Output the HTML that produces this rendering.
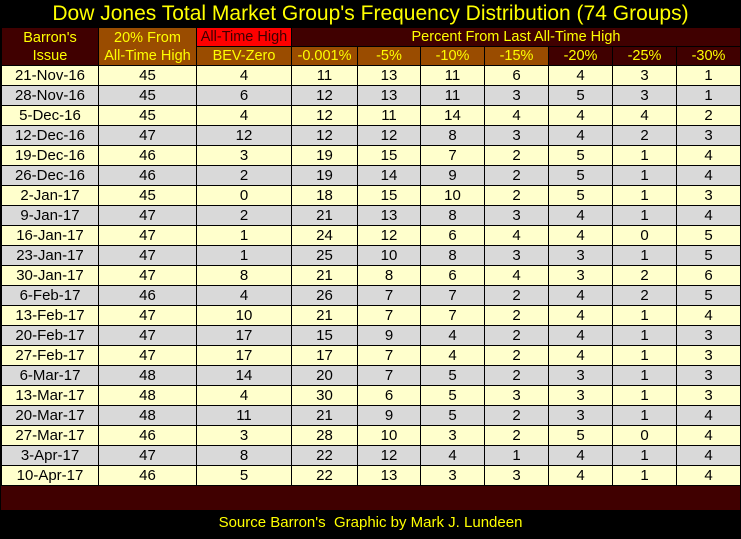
<!DOCTYPE html>
<html><head><style>
body{margin:0;width:741px;height:539px;background:#000;overflow:hidden;font-family:"Liberation Sans",Arial,sans-serif;position:relative}
.t{position:absolute;left:0;top:1px;width:741px;text-align:center;color:#ffff00;font-size:21px;line-height:26px}
table{position:absolute;left:1px;top:27px;border-collapse:collapse;table-layout:fixed}
td{border:1px solid #000;padding:0;text-align:center;font-size:15px;line-height:19px;height:19px;color:#000;overflow:hidden;white-space:nowrap}
tr.h td{color:#ffff00;font-size:14.5px;height:18px;line-height:18px}
.m{background:#400000}.b{background:#9a4c00}.r{background:#ff0000;color:#400000!important}
tr.o td{background:#ffffcc}tr.e td{background:#d9d9d9}
.bot{position:absolute;left:1px;top:486px;width:739px;height:24px;background:#400000}
.s{position:absolute;left:0;width:741px;top:514px;text-align:center;color:#ffff00;font-size:15px}
</style></head><body>
<div class="t">Dow Jones Total Market Group's Frequency Distribution (74 Groups)</div>
<table>
<colgroup><col style="width:97px"><col style="width:98px"><col style="width:95px"><col style="width:66px"><col style="width:63px"><col style="width:64px"><col style="width:64px"><col style="width:64px"><col style="width:64px"><col style="width:64px"></colgroup>
<tr class="h"><td class="m" rowspan="2" style="line-height:18px">Barron's<br>Issue</td><td class="b" rowspan="2">20% From<br>All-Time High</td><td class="r" style="color:#400000">All-Time High</td><td class="m" colspan="7">Percent From Last All-Time High</td></tr>
<tr class="h"><td class="b">BEV-Zero</td><td class="b">-0.001%</td><td class="b">-5%</td><td class="b">-10%</td><td class="b">-15%</td><td class="m">-20%</td><td class="m">-25%</td><td class="m">-30%</td></tr>
<tr class="o"><td>21-Nov-16</td><td>45</td><td>4</td><td>11</td><td>13</td><td>11</td><td>6</td><td>4</td><td>3</td><td>1</td></tr>
<tr class="e"><td>28-Nov-16</td><td>45</td><td>6</td><td>12</td><td>13</td><td>11</td><td>3</td><td>5</td><td>3</td><td>1</td></tr>
<tr class="o"><td>5-Dec-16</td><td>45</td><td>4</td><td>12</td><td>11</td><td>14</td><td>4</td><td>4</td><td>4</td><td>2</td></tr>
<tr class="e"><td>12-Dec-16</td><td>47</td><td>12</td><td>12</td><td>12</td><td>8</td><td>3</td><td>4</td><td>2</td><td>3</td></tr>
<tr class="o"><td>19-Dec-16</td><td>46</td><td>3</td><td>19</td><td>15</td><td>7</td><td>2</td><td>5</td><td>1</td><td>4</td></tr>
<tr class="e"><td>26-Dec-16</td><td>46</td><td>2</td><td>19</td><td>14</td><td>9</td><td>2</td><td>5</td><td>1</td><td>4</td></tr>
<tr class="o"><td>2-Jan-17</td><td>45</td><td>0</td><td>18</td><td>15</td><td>10</td><td>2</td><td>5</td><td>1</td><td>3</td></tr>
<tr class="e"><td>9-Jan-17</td><td>47</td><td>2</td><td>21</td><td>13</td><td>8</td><td>3</td><td>4</td><td>1</td><td>4</td></tr>
<tr class="o"><td>16-Jan-17</td><td>47</td><td>1</td><td>24</td><td>12</td><td>6</td><td>4</td><td>4</td><td>0</td><td>5</td></tr>
<tr class="e"><td>23-Jan-17</td><td>47</td><td>1</td><td>25</td><td>10</td><td>8</td><td>3</td><td>3</td><td>1</td><td>5</td></tr>
<tr class="o"><td>30-Jan-17</td><td>47</td><td>8</td><td>21</td><td>8</td><td>6</td><td>4</td><td>3</td><td>2</td><td>6</td></tr>
<tr class="e"><td>6-Feb-17</td><td>46</td><td>4</td><td>26</td><td>7</td><td>7</td><td>2</td><td>4</td><td>2</td><td>5</td></tr>
<tr class="o"><td>13-Feb-17</td><td>47</td><td>10</td><td>21</td><td>7</td><td>7</td><td>2</td><td>4</td><td>1</td><td>4</td></tr>
<tr class="e"><td>20-Feb-17</td><td>47</td><td>17</td><td>15</td><td>9</td><td>4</td><td>2</td><td>4</td><td>1</td><td>3</td></tr>
<tr class="o"><td>27-Feb-17</td><td>47</td><td>17</td><td>17</td><td>7</td><td>4</td><td>2</td><td>4</td><td>1</td><td>3</td></tr>
<tr class="e"><td>6-Mar-17</td><td>48</td><td>14</td><td>20</td><td>7</td><td>5</td><td>2</td><td>3</td><td>1</td><td>3</td></tr>
<tr class="o"><td>13-Mar-17</td><td>48</td><td>4</td><td>30</td><td>6</td><td>5</td><td>3</td><td>3</td><td>1</td><td>3</td></tr>
<tr class="e"><td>20-Mar-17</td><td>48</td><td>11</td><td>21</td><td>9</td><td>5</td><td>2</td><td>3</td><td>1</td><td>4</td></tr>
<tr class="o"><td>27-Mar-17</td><td>46</td><td>3</td><td>28</td><td>10</td><td>3</td><td>2</td><td>5</td><td>0</td><td>4</td></tr>
<tr class="e"><td>3-Apr-17</td><td>47</td><td>8</td><td>22</td><td>12</td><td>4</td><td>1</td><td>4</td><td>1</td><td>4</td></tr>
<tr class="o"><td>10-Apr-17</td><td>46</td><td>5</td><td>22</td><td>13</td><td>3</td><td>3</td><td>4</td><td>1</td><td>4</td></tr>
</table>
<div class="bot"></div>
<div class="s">Source Barron's&nbsp; Graphic by Mark J. Lundeen</div>
</body></html>
